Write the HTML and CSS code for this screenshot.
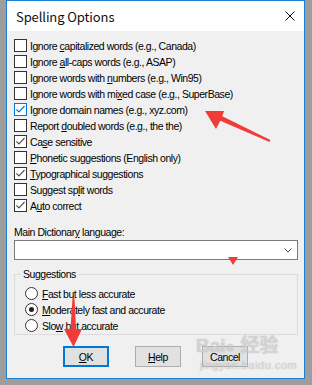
FILE: index.html
```html
<!DOCTYPE html>
<html lang="en">
<head>
  <meta charset="UTF-8" />
  <title>Spelling Options</title>
  <link rel="stylesheet" href="styles.css">
</head>
<body>
  <div class="window">
    <div class="titlebar">
      <span class="title">Spelling Options</span>
      <svg class="close" width="10" height="10" viewBox="0 0 10 10">
        <path d="M0.5 0.5 L9.5 9.5 M9.5 0.5 L0.5 9.5" stroke="#111" stroke-width="1" fill="none"/>
      </svg>
    </div>

    <div class="content">
      <div class="checks">
        <div class="row"><span class="box"></span><span>Ignore <u>c</u>apitalized words (e.g., Canada)</span></div>
        <div class="row"><span class="box"></span><span>Ignore <u>a</u>ll-caps words (e.g., ASAP)</span></div>
        <div class="row"><span class="box"></span><span>Ignore words with <u>n</u>umbers (e.g., Win95)</span></div>
        <div class="row"><span class="box"></span><span>Ignore words with mi<u>x</u>ed case (e.g., SuperBase)</span></div>
        <div class="row"><span class="box box-focus">
          <svg width="11" height="11" viewBox="0 0 11 11"><polyline points="1.5,5.5 4,8 9.5,2" fill="none" stroke="#0078d7" stroke-width="1.2"/></svg>
        </span><span>Ignore domain names (e.g., xyz.com)</span></div>
        <div class="row"><span class="box"></span><span>Report <u>d</u>oubled words (e.g., the the)</span></div>
        <div class="row"><span class="box">
          <svg width="11" height="11" viewBox="0 0 11 11"><polyline points="1.5,5.5 4,8 9.5,2" fill="none" stroke="#555" stroke-width="1.2"/></svg>
        </span><span>Ca<u>s</u>e sensitive</span></div>
        <div class="row"><span class="box"></span><span><u>P</u>honetic suggestions (English only)</span></div>
        <div class="row"><span class="box">
          <svg width="11" height="11" viewBox="0 0 11 11"><polyline points="1.5,5.5 4,8 9.5,2" fill="none" stroke="#555" stroke-width="1.2"/></svg>
        </span><span><u>T</u>ypographical suggestions</span></div>
        <div class="row"><span class="box"></span><span>Suggest sp<u>l</u>it words</span></div>
        <div class="row"><span class="box">
          <svg width="11" height="11" viewBox="0 0 11 11"><polyline points="1.5,5.5 4,8 9.5,2" fill="none" stroke="#555" stroke-width="1.2"/></svg>
        </span><span>A<u>u</u>to correct</span></div>
      </div>

      <div class="dict-label">Main Dictionar<u>y</u> language:</div>
      <div class="select">
        <svg width="8" height="5" viewBox="0 0 8 5"><polyline points="0.5,0.5 4,4 7.5,0.5" fill="none" stroke="#444" stroke-width="1"/></svg>
      </div>

      <fieldset class="group">
        <legend>Suggestions</legend>
        <div class="radio-row"><span class="radio"></span><span><u>F</u>ast but less accurate</span></div>
        <div class="radio-row"><span class="radio radio-on"></span><span><u>M</u>oderately fast and accurate</span></div>
        <div class="radio-row"><span class="radio"></span><span>Slo<u>w</u> but accurate</span></div>
      </fieldset>

      <div class="buttons">
        <div class="btn btn-default"><u>O</u>K</div>
        <div class="btn"><u>H</u>elp</div>
        <div class="btn">Cancel</div>
      </div>
    </div>
  </div>

  <!-- red annotation arrows -->
  <svg class="marks" width="312" height="385" viewBox="0 0 312 385">
    <polygon fill="#f03c38" points="205,111 224,111 222.3,116.2 270.4,140.1 269.6,141.9 220.3,120.8 216,129"/>
    <polygon fill="#f03c38" points="228,257 238,257 233,265"/>
    <polygon fill="#f03c38" points="72.5,298 74.5,298 76,329 82,329 73.5,347 64,329 70.5,329"/>
  </svg>

  <div class="watermark">
    <div class="wm-logo">Bai<span class="paw">&#9679;</span> 经验</div>
    <div class="wm-url">jingyan.baidu.com</div>
  </div>
</body>
</html>
```

FILE: styles.css
```css
body {
  margin: 0;
  width: 312px;
  height: 385px;
  overflow: hidden;
  position: relative;
  background: #9d9d9d;
  font-family: "Liberation Sans", Arial, sans-serif;
  font-size: 10.5px;
  letter-spacing: -0.45px;
  color: #000;
}
u {
  text-underline-offset: 1px;
}
.window {
  margin-left: 6px;
  width: 297px;
  height: 377px;
  border: 1px solid #1a80d6;
  background: #f0f0f0;
  display: flex;
  flex-direction: column;
}
.titlebar {
  height: 30px;
  flex: none;
  background: #fff;
  display: flex;
  align-items: center;
  justify-content: space-between;
  padding: 0 9px 0 9px;
}
.title {
  font-family: "Noto Sans CJK SC", "Noto Sans", sans-serif;
  font-size: 13px;
  letter-spacing: -0.1px;
  color: #111;
}
.content {
  padding: 7px 6px 0 7px;
  display: flex;
  flex-direction: column;
}
.row {
  display: flex;
  height: 16px;
  line-height: 16px;
  white-space: nowrap;
}
.box {
  width: 13px;
  height: 13px;
  box-sizing: border-box;
  border: 1px solid #333;
  background: #fff;
  margin: 1px 3px 0 0;
  flex: none;
  display: flex;
}
.box-focus {
  border-color: #0078d7;
}
.dict-label {
  margin-top: 10px;
  height: 16px;
  line-height: 16px;
}
.select {
  height: 20px;
  box-sizing: border-box;
  border: 1px solid #7a7a7a;
  background: #fff;
  display: flex;
  align-items: center;
  justify-content: flex-end;
  padding-right: 5px;
}
.group {
  margin: 8px 0 0;
  border: 1px solid #dcdcdc;
  padding: 0 6px 0 6px;
}
.group legend {
  padding: 0 2px;
  line-height: 13px;
}
.radio-row {
  display: flex;
  height: 16px;
  line-height: 16px;
  margin-left: 4px;
  white-space: nowrap;
}
.radio-row:first-of-type {
  margin-top: 5px;
}
.radio {
  width: 13px;
  height: 13px;
  box-sizing: border-box;
  border: 1px solid #333;
  border-radius: 50%;
  background: #fff;
  margin: 1px 4px 0 0;
  flex: none;
  display: flex;
  align-items: center;
  justify-content: center;
}
.radio-on::after {
  content: "";
  width: 5px;
  height: 5px;
  border-radius: 50%;
  background: #222;
}
.buttons {
  margin-top: 11px;
  padding-left: 49px;
  display: flex;
  gap: 21px;
}
.btn {
  width: 46px;
  height: 21px;
  box-sizing: border-box;
  border: 1px solid #adadad;
  background: #e1e1e1;
  display: flex;
  align-items: center;
  justify-content: center;
}
.btn-default {
  border: 2px solid #0078d7;
  margin-right: 5px;
}
.marks {
  position: absolute;
  top: 0;
  left: 0;
  pointer-events: none;
}
.watermark {
  position: absolute;
  left: 196px;
  top: 334px;
  color: rgba(255, 255, 255, 0.5);
  text-shadow: 0 0 1px rgba(110, 110, 110, 0.6);
  letter-spacing: 0;
  pointer-events: none;
}
.wm-logo {
  font-family: "Liberation Sans", "Noto Sans CJK SC", sans-serif;
  font-weight: bold;
  font-size: 19px;
  line-height: 24px;
}
.paw {
  font-size: 16px;
}
.wm-url {
  font-size: 11px;
  line-height: 12px;
  margin-left: 4px;
  letter-spacing: 0.5px;
}
```
